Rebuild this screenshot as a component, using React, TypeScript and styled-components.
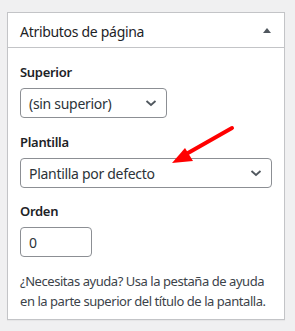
import React from "react";
import styled, { createGlobalStyle } from "styled-components";

const Global = createGlobalStyle`
  html, body { margin: 0; padding: 0; background: #f0f0f1; }
  body { font-family: "Noto Sans", "Open Sans", sans-serif; color: #1d2327; }
  * { box-sizing: border-box; }
`;

const Page = styled.div`
  padding: 12px 0 0 7px;
  width: 295px;
  height: 331px;
`;

const Panel = styled.section`
  width: 278px;
  background: #fff;
  border: 1px solid #c3c4c7;
  box-shadow: 0 1px 1px rgba(0, 0, 0, 0.04);
`;

const Header = styled.div`
  height: 35px;
  border-bottom: 1px solid #c3c4c7;
  display: flex;
  align-items: center;
  justify-content: space-between;
  padding: 3px 12px 0 12px;
`;

const Title = styled.h2`
  margin: 0;
  font-size: 14px;
  font-weight: 400;
  color: #1d2327;
  line-height: 1.4;
  letter-spacing: -0.3px;
`;

const Toggle = styled.span`
  width: 0;
  height: 0;
  border-left: 4.5px solid transparent;
  border-right: 4.5px solid transparent;
  border-bottom: 5px solid #50575e;
  margin-right: 1px;
  margin-bottom: 2px;
`;

const Body = styled.div`
  padding: 14px 12px 8px 12px;
  display: flex;
  flex-direction: column;
`;

const Label = styled.div<{ $top?: number }>`
  font-size: 13px;
  font-weight: 600;
  line-height: 20px;
  margin-top: ${(p) => p.$top ?? 0}px;
  margin-bottom: 6px;
  color: #1d2327;
  letter-spacing: -0.3px;
`;

const Field = styled.div<{ $width: number }>`
  position: relative;
  width: ${(p) => p.$width}px;
  height: 30px;
  border: 1px solid #8c8f94;
  border-radius: 4px;
  display: flex;
  align-items: center;
  padding: 0 8px;
  font-size: 14px;
  color: #2c3338;
  background: #fff;
  letter-spacing: -0.3px;
`;

const FieldText = styled.span`
  flex: 1;
  white-space: nowrap;
`;

const Chevron = () => (
  <svg width="12" height="8" viewBox="0 0 12 8" style={{ marginRight: 1 }}>
    <path d="M1.5 2 L6 6 L10.5 2" fill="none" stroke="#50575e" strokeWidth="1.8" />
  </svg>
);

const Help = styled.p`
  margin: 15px 0 0 0;
  font-size: 13px;
  line-height: 19.5px;
  color: #3c434a;
  letter-spacing: -0.45px;
`;

const ArrowWrap = styled.svg`
  position: absolute;
  left: 160px;
  top: 120px;
  overflow: visible;
`;

export default function App() {
  return (
    <>
      <Global />
      <Page>
        <Panel>
          <Header>
            <Title>Atributos de página</Title>
            <Toggle />
          </Header>
          <Body>
            <Label>Superior</Label>
            <Field $width={147}>
              <FieldText>(sin superior)</FieldText>
              <Chevron />
            </Field>
            <Label $top={14}>Plantilla</Label>
            <Field $width={252}>
              <FieldText>Plantilla por defecto</FieldText>
              <Chevron />
            </Field>
            <Label $top={13}>Orden</Label>
            <Field $width={72}>
              <FieldText>0</FieldText>
            </Field>
            <Help>
              ¿Necesitas ayuda? Usa la pestaña de ayuda en la parte superior del título de la pantalla.
            </Help>
          </Body>
        </Panel>
      </Page>
      <ArrowWrap width="80" height="50" viewBox="0 0 80 50">
        <line x1="72" y1="8" x2="28" y2="33" stroke="#ff0000" strokeWidth="4" strokeLinecap="round" />
        <polygon points="12,43 25,28 33,41" fill="#ff0000" />
      </ArrowWrap>
    </>
  );
}
